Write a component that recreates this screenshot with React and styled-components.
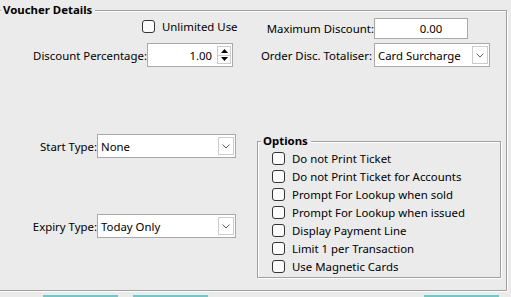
import React from 'react';
import styled, { createGlobalStyle } from 'styled-components';

const GlobalStyle = createGlobalStyle`
  html, body {
    margin: 0;
    padding: 0;
    background: #ebebeb;
    overflow: hidden;
  }
  body {
    font-family: "Segoe UI", "Noto Sans", sans-serif;
    font-size: 11.4px;
    color: #000;
  }
`;

const Page = styled.div`
  width: 511px;
  height: 297px;
  overflow: hidden;
`;

const Group = styled.div`
  position: relative;
  box-sizing: border-box;
  width: ${({ $w }) => $w}px;
  height: ${({ $h }) => $h}px;
  margin-top: ${({ $mt }) => $mt || 0}px;
  margin-left: ${({ $ml }) => $ml || 0}px;
  border: 1px solid #a0a0a0;
  box-shadow: inset 1px 1px 0 #fff, 1px 1px 0 #fff;
  padding: ${({ $pad }) => $pad};
`;

const Legend = styled.span`
  position: absolute;
  top: -11px;
  left: 3px;
  padding: 0 3px 0 2px;
  line-height: 20px;
  font-weight: 700;
  background: #ebebeb;
`;

const Columns = styled.div`
  display: flex;
`;

const Column = styled.div`
  display: flex;
  flex-direction: column;
  width: ${({ $w }) => $w}px;
  flex-shrink: 0;
`;

const Row = styled.div`
  display: flex;
  align-items: center;
  height: ${({ $h }) => $h}px;
  margin-top: ${({ $mt }) => $mt || 0}px;
  padding-left: ${({ $pl }) => $pl || 0}px;
`;

const Label = styled.label`
  width: ${({ $w }) => $w}px;
  flex-shrink: 0;
  text-align: right;
  white-space: nowrap;
  padding-right: ${({ $pr }) => $pr || 0}px;
  box-sizing: border-box;
`;

const Box = styled.div`
  box-sizing: border-box;
  display: flex;
  align-items: center;
  width: ${({ $w }) => $w}px;
  height: 100%;
  background: #fff;
  border: 1px solid #a9a9a9;
`;

const Value = styled.span`
  flex: 1;
  text-align: ${({ $align }) => $align || 'left'};
  padding: ${({ $pad }) => $pad};
  white-space: nowrap;
`;

const DropButton = styled.span`
  box-sizing: border-box;
  display: flex;
  align-items: center;
  justify-content: center;
  width: 16px;
  height: calc(100% - 4px);
  margin-right: 1px;
  border: 1px solid #cdcdcd;
  background: #fff;
`;

const Spinner = styled.span`
  box-sizing: border-box;
  display: flex;
  flex-direction: column;
  width: 14px;
  height: calc(100% - 4px);
  margin-right: 1px;
  border: 1px solid #cdcdcd;
`;

const SpinHalf = styled.span`
  flex: 1;
  display: flex;
  align-items: center;
  justify-content: center;
  & + & {
    border-top: 1px solid #cdcdcd;
  }
`;

const Check = styled.span`
  box-sizing: border-box;
  width: 13px;
  height: 13px;
  flex-shrink: 0;
  border: 1px solid #333;
  border-radius: 3px;
  background: #fbfbfb;
  margin-right: 7px;
`;

const OptionList = styled.div`
  display: flex;
  flex-direction: column;
`;

const ButtonBar = styled.div`
  display: flex;
  gap: 15px;
  margin-top: 4px;
  padding: 0 12px 0 43px;
`;

const BarButton = styled.div`
  box-sizing: border-box;
  width: 75px;
  height: 22px;
  border: 2px solid #6cc9c8;
  background: #e6e6e6;
  margin-left: ${({ $push }) => ($push ? 'auto' : '0')};
`;

const Chevron = () => (
  <svg width="8" height="5" viewBox="0 0 8 5">
    <path d="M0.5 0.5 L4 4 L7.5 0.5" fill="none" stroke="#606060" strokeWidth="1" />
  </svg>
);

const Tri = ({ up }) => (
  <svg width="7" height="4" viewBox="0 0 7 4">
    <path d={up ? 'M3.5 0 L7 4 L0 4 Z' : 'M0 0 L7 0 L3.5 4 Z'} fill="#000" />
  </svg>
);

const Select = ({ w, value }) => (
  <Box $w={w}>
    <Value $pad="0 0 0 3px">{value}</Value>
    <DropButton>
      <Chevron />
    </DropButton>
  </Box>
);

const options = [
  'Do not Print Ticket',
  'Do not Print Ticket for Accounts',
  'Prompt For Lookup when sold',
  'Prompt For Lookup when issued',
  'Display Payment Line',
  'Limit 1 per Transaction',
  'Use Magnetic Cards',
];

const App = () => {
  return (
    <Page>
      <GlobalStyle />
      <Group $w={510} $h={281} $mt={10} $ml={-3} $pad="7px 0 0 0">
        <Legend>Voucher Details</Legend>
        <Columns>
          <Column $w={259}>
            <Row $h={17} $pl={144}>
              <Check />
              <span>Unlimited Use</span>
            </Row>
            <Row $h={24} $mt={8}>
              <Label $w={149}>Discount Percentage:</Label>
              <Box $w={86}>
                <Value $align="right" $pad="0 5px 0 0">1.00</Value>
                <Spinner>
                  <SpinHalf><Tri up /></SpinHalf>
                  <SpinHalf><Tri /></SpinHalf>
                </Spinner>
              </Box>
            </Row>
            <Row $h={24} $mt={67}>
              <Label $w={99}>Start Type:</Label>
              <Select w={139} value="None" />
            </Row>
            <Row $h={24} $mt={56}>
              <Label $w={99}>Expiry Type:</Label>
              <Select w={139} value="Today Only" />
            </Row>
          </Column>
          <Column $w={244}>
            <Row $h={21}>
              <Label $w={117}>Maximum Discount:</Label>
              <Box $w={94}>
                <Value $align="center" $pad="0 0 0 20px">0.00</Value>
              </Box>
            </Row>
            <Row $h={24} $mt={4}>
              <Label $w={117} $pr={2}>Order Disc. Totaliser:</Label>
              <Select w={116} value="Card Surcharge" />
            </Row>
            <Group $w={244} $h={137} $mt={74} $pad="7px 0 0 14px">
              <Legend>Options</Legend>
              <OptionList>
                {options.map((o) => (
                  <Row key={o} $h={18}>
                    <Check />
                    <span>{o}</span>
                  </Row>
                ))}
              </OptionList>
            </Group>
          </Column>
        </Columns>
      </Group>
      <ButtonBar>
        <BarButton />
        <BarButton />
        <BarButton $push />
      </ButtonBar>
    </Page>
  );
};

export default App;
